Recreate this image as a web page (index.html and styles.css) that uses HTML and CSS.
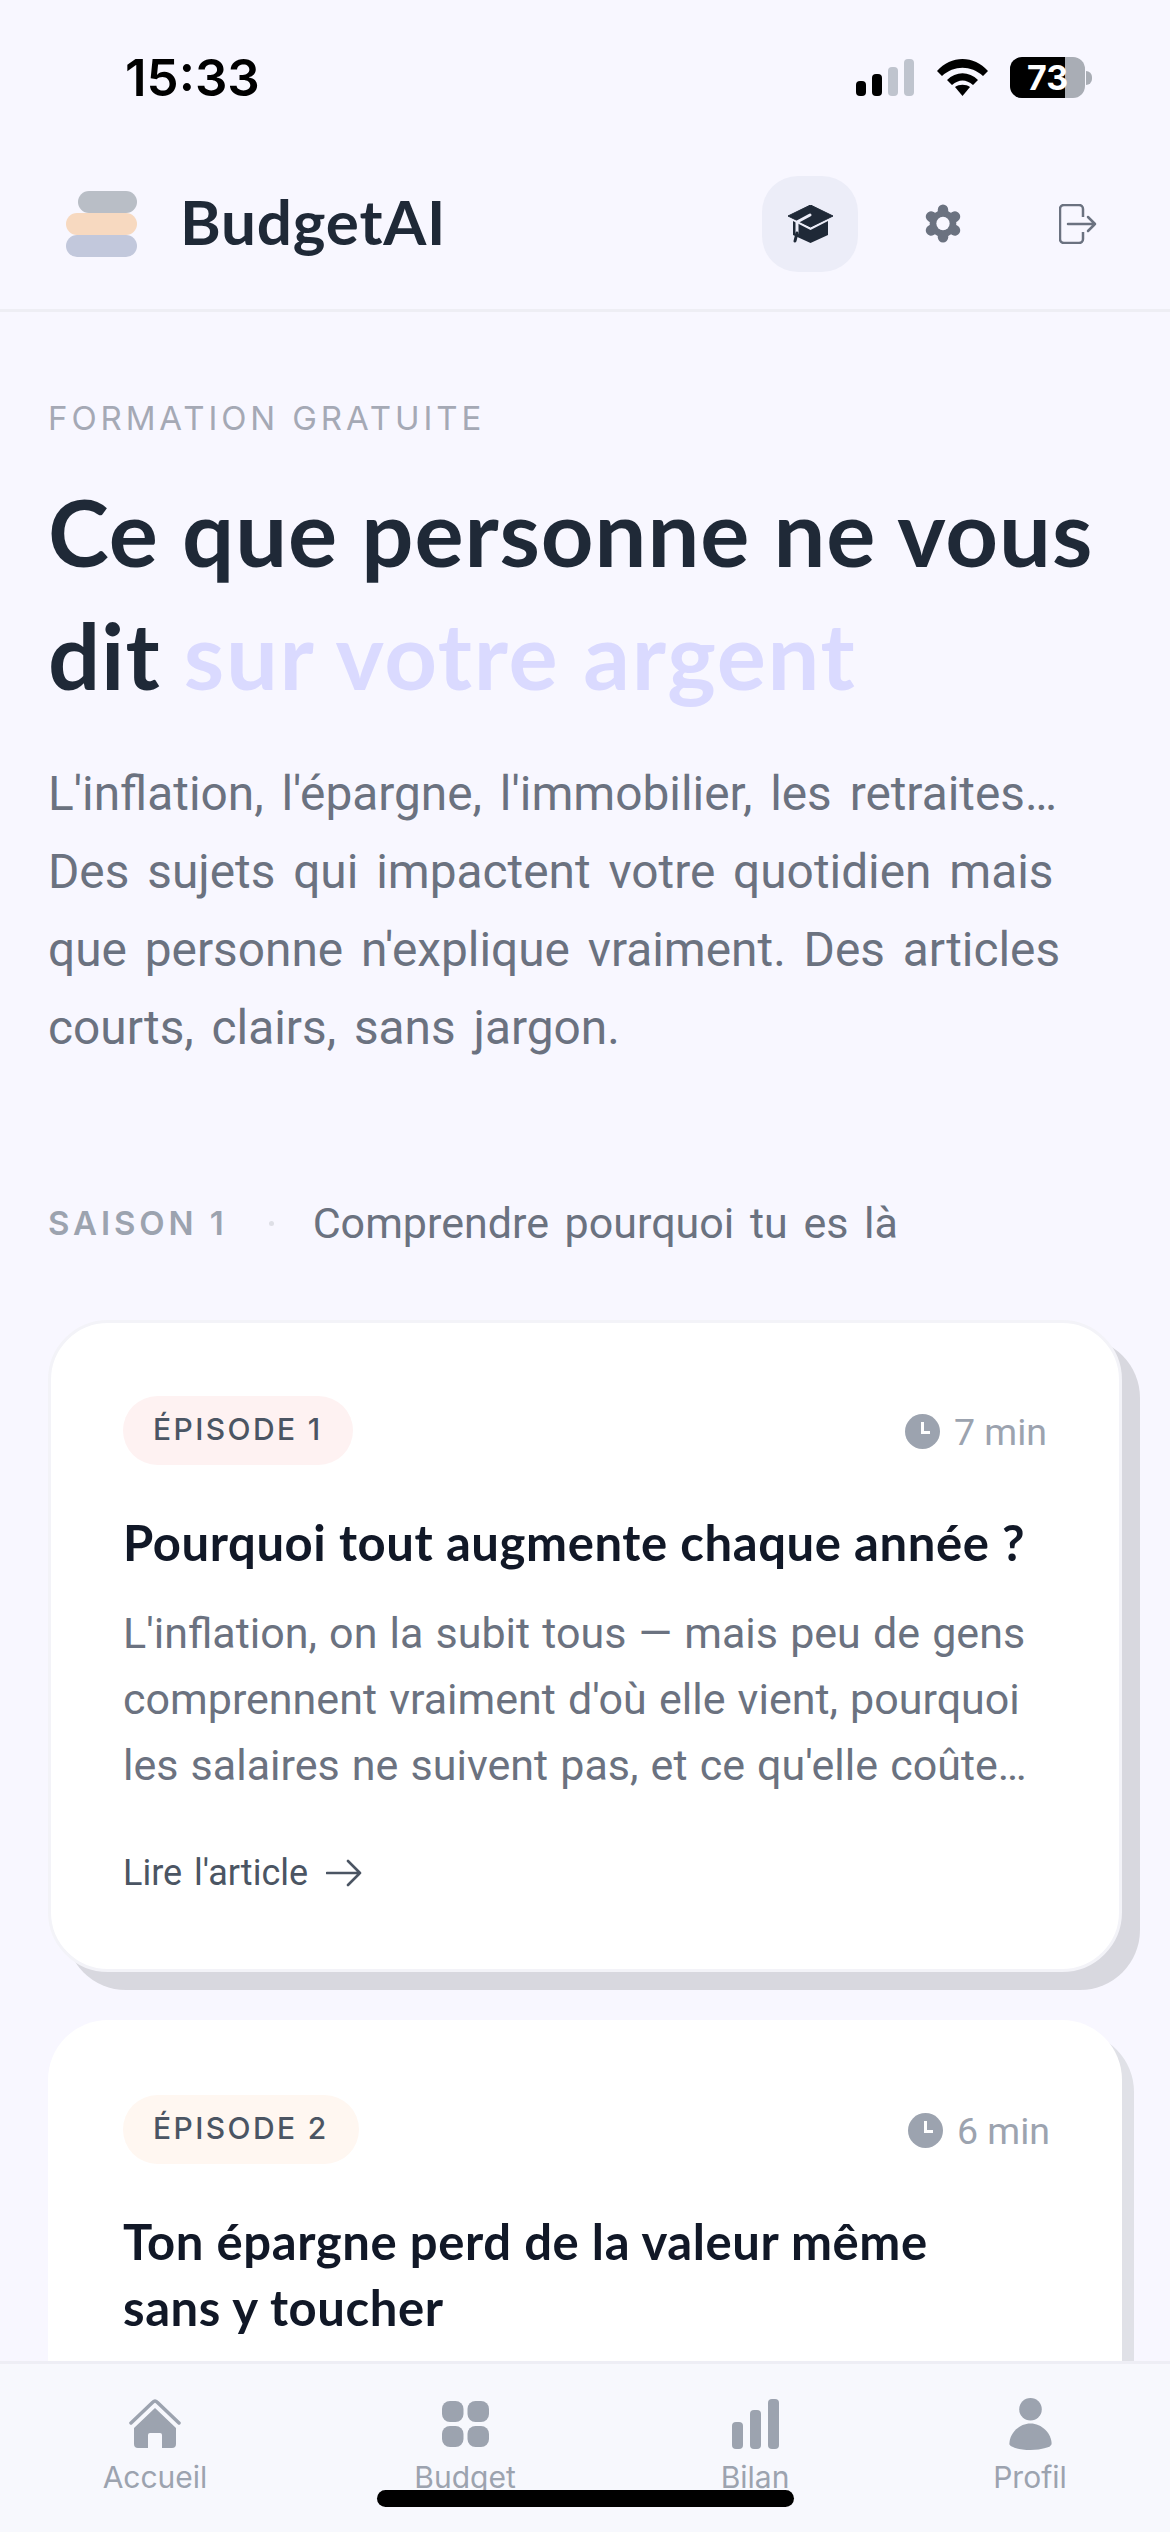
FILE: index.html

```html
<!DOCTYPE html>
<html lang="fr">
<head>
    <meta charset="UTF-8">
    <meta name="viewport" content="width=device-width, initial-scale=1.0">
    <title>BudgetAI - Formation</title>
    <link rel="stylesheet" href="styles.css">
</head>
<body>
    <div class="status-bar">
        <span class="clock-time">15:33</span>
        <div class="status-icons">
            <svg class="signal" width="59" height="37" viewBox="0 0 59 37">
                <rect x="0" y="22" width="10" height="15" rx="4" fill="#000"/>
                <rect x="16" y="15" width="10" height="22" rx="4" fill="#000"/>
                <rect x="32" y="8" width="10" height="29" rx="4" fill="#bfc4ce"/>
                <rect x="48" y="0" width="10" height="37" rx="4" fill="#bfc4ce"/>
            </svg>
            <svg class="wifi" width="51" height="37" viewBox="0 0 51 37">
                <path d="M0 12C14-4 37-4 51 12L46 17C34 6 17 6 5 17Z" fill="#000"/>
                <path d="M10 21C19 12 32 12 41 21L36 26C29 20 22 20 15 26Z" fill="#000"/>
                <path d="M18 28C22 25 29 25 33 28L25.500 37Z" fill="#000"/>
            </svg>
            <div class="battery">
                <div class="battery-body">
                    <div class="battery-fill"></div>
                    <span class="battery-num">73</span>
                </div>
                <div class="battery-nub"></div>
            </div>
        </div>
    </div>

    <header class="top-bar">
        <div class="brand">
            <div class="logo">
                <span class="pill pill-grey"></span>
                <span class="pill pill-peach"></span>
                <span class="pill pill-blue"></span>
            </div>
            <span class="brand-name">BudgetAI</span>
        </div>
        <div class="top-actions">
            <div class="icon-btn active">
                <svg width="45" height="38" viewBox="0 0 45 38">
                    <path d="M22.500 0L45 11L22.500 22L0 11Z" fill="#1f2937" stroke="#1f2937" stroke-linejoin="round"/>
                    <path d="M5 16L22.500 25L40 16V30L22.500 38L5 30Z" fill="#1f2937"/>
                    <path d="M22 10L9 17V28" fill="none" stroke="#ecedf8" stroke-width="3" stroke-linecap="round" stroke-linejoin="round"/>
                    <path d="M9 28L7 36" stroke="#1f2937" stroke-width="3" stroke-linecap="round"/>
                </svg>
            </div>
            <div class="icon-btn gear">
                <svg width="38" height="39" viewBox="0 0 40 40">
                    <g stroke="#6b7280" stroke-width="11" stroke-linecap="round">
                        <path d="M20 5.500V34.500"/>
                        <path d="M7.400 12.750L32.600 27.250"/>
                        <path d="M7.400 27.250L32.600 12.750"/>
                    </g>
                    <circle cx="20" cy="20" r="14" fill="#6b7280"/>
                    <circle cx="20" cy="20" r="7" fill="#f8f7ff"/>
                </svg>
            </div>
            <div class="icon-btn logout">
                <svg width="38" height="40" viewBox="0 0 38 40">
                    <path d="M24 13V5a4 4 0 0 0-4-4H5a4 4 0 0 0-4 4v30a4 4 0 0 0 4 4h15a4 4 0 0 0 4-4v-7" fill="none" stroke="#6b7280" stroke-width="2.500"/>
                    <path d="M9 20H36M29 13L36 20L29 27" fill="none" stroke="#6b7280" stroke-width="2.500" stroke-linecap="round" stroke-linejoin="round"/>
                </svg>
            </div>
        </div>
    </header>

    <main class="content">
        <p class="eyebrow">FORMATION GRATUITE</p>
        <h1 class="hero-title">
            <span class="hero-line">Ce que personne ne vous</span>
            <span class="hero-line">dit <span class="accent">sur votre argent</span></span>
        </h1>
        <p class="hero-text">L'inflation, l'épargne, l'immobilier, les retraites… Des sujets qui impactent votre quotidien mais que personne n'explique vraiment. Des articles courts, clairs, sans jargon.</p>

        <div class="season">
            <span class="season-num">SAISON 1</span>
            <span class="season-dot"></span>
            <span class="season-name">Comprendre pourquoi tu es là</span>
        </div>

        <article class="card card-first">
            <div class="card-top">
                <span class="badge badge-red">ÉPISODE 1</span>
                <span class="duration">
                    <svg width="35" height="35" viewBox="0 0 35 35"><circle cx="17.500" cy="17.500" r="17.500" fill="#9ca3af"/><path d="M17.500 8V18.500H25" fill="none" stroke="#fff" stroke-width="3"/></svg>
                    7 min
                </span>
            </div>
            <h2 class="card-title">Pourquoi tout augmente chaque année ?</h2>
            <p class="card-text">L'inflation, on la subit tous — mais peu de gens comprennent vraiment d'où elle vient, pourquoi les salaires ne suivent pas, et ce qu'elle coûte…</p>
            <div class="read-link">
                Lire l'article
                <svg width="36" height="28" viewBox="0 0 36 28"><path d="M1 14H34M22 2L34 14L22 26" fill="none" stroke="#4b5563" stroke-width="2.600" stroke-linecap="round" stroke-linejoin="round"/></svg>
            </div>
        </article>

        <article class="card card-second">
            <div class="card-top">
                <span class="badge badge-orange">ÉPISODE 2</span>
                <span class="duration">
                    <svg width="35" height="35" viewBox="0 0 35 35"><circle cx="17.500" cy="17.500" r="17.500" fill="#9ca3af"/><path d="M17.500 8V18.500H25" fill="none" stroke="#fff" stroke-width="3"/></svg>
                    6 min
                </span>
            </div>
            <h2 class="card-title">Ton épargne perd de la valeur même<br>sans y toucher</h2>
        </article>
    </main>

    <nav class="bottom-nav">
        <div class="nav-item">
            <svg width="52" height="50" viewBox="0 0 52 50">
                <path d="M2 24L24 3Q26 1 28 3L50 24" fill="none" stroke="#9ca3af" stroke-width="3.500" stroke-linecap="round" stroke-linejoin="round"/>
                <path d="M26 9L47 29V45a4 4 0 0 1-4 4H33V36a2 2 0 0 0-2-2H21a2 2 0 0 0-2 2V49H9a4 4 0 0 1-4-4V29Z" fill="#9ca3af"/>
            </svg>
            <span>Accueil</span>
        </div>
        <div class="nav-item">
            <svg width="47" height="50" viewBox="0 0 47 50">
                <rect x="0" y="2" width="21.500" height="21" rx="8" fill="#9ca3af"/>
                <rect x="25.500" y="2" width="21.500" height="21" rx="8" fill="#9ca3af"/>
                <rect x="0" y="27" width="21.500" height="21" rx="8" fill="#9ca3af"/>
                <rect x="25.500" y="27" width="21.500" height="21" rx="8" fill="#9ca3af"/>
            </svg>
            <span>Budget</span>
        </div>
        <div class="nav-item">
            <svg width="47" height="50" viewBox="0 0 47 50">
                <rect x="0" y="23" width="11" height="27" rx="4" fill="#9ca3af"/>
                <rect x="18" y="11" width="11" height="39" rx="4" fill="#9ca3af"/>
                <rect x="36" y="0" width="11" height="50" rx="4" fill="#9ca3af"/>
            </svg>
            <span>Bilan</span>
        </div>
        <div class="nav-item">
            <svg width="43" height="53" viewBox="0 0 43 53">
                <circle cx="21.500" cy="11.500" r="11.500" fill="#9ca3af"/>
                <path d="M21.500 26C33 26 43 36 43 47C43 50 33 53 21.500 53S0 50 0 47C0 36 10 26 21.500 26Z" fill="#9ca3af"/>
            </svg>
            <span>Profil</span>
        </div>
    </nav>
    <div class="home-indicator"></div>
</body>
</html>
```

FILE: styles.css

```css
* {
    box-sizing: border-box;
}

html, body {
    margin: 0;
    padding: 0;
}

body {
    width: 1170px;
    height: 2532px;
    overflow: hidden;
    display: flex;
    flex-direction: column;
    position: relative;
    background-color: #f8f7ff;
    font-family: "Inter", sans-serif;
}

/* status bar */
.status-bar {
    height: 138px;
    flex-shrink: 0;
    display: flex;
    justify-content: space-between;
    align-items: flex-start;
    padding: 50px 78px 0 125px;
}

.clock-time {
    font-size: 51px;
    line-height: 56px;
    font-weight: 600;
    color: #000;
}

.status-icons {
    display: flex;
    align-items: center;
    gap: 22px;
    margin-top: 7px;
}

.battery {
    display: flex;
    align-items: center;
    gap: 1px;
}

.battery-body {
    width: 75px;
    height: 41px;
    border-radius: 12px;
    background-color: #a9adb5;
    overflow: hidden;
    position: relative;
    display: flex;
    align-items: center;
    justify-content: center;
}

.battery-fill {
    position: absolute;
    left: 0;
    top: 0;
    bottom: 0;
    width: 55px;
    background-color: #000;
}

.battery-num {
    position: relative;
    font-size: 34px;
    font-weight: 700;
    color: #fff;
    line-height: 41px;
}

.battery-nub {
    width: 6px;
    height: 14px;
    border-radius: 0 6px 6px 0;
    background-color: #a9adb5;
}

/* top bar */
.top-bar {
    height: 174px;
    flex-shrink: 0;
    display: flex;
    justify-content: space-between;
    align-items: center;
    padding: 0 73px 0 66px;
    border-bottom: 3px solid #eeeef4;
}

.brand {
    display: flex;
    align-items: center;
    gap: 43px;
}

.logo {
    width: 71px;
    display: flex;
    flex-direction: column;
    align-items: flex-end;
}

.pill {
    display: block;
    width: 71px;
    height: 22px;
    border-radius: 11px;
}

.pill-grey {
    width: 59px;
    background-color: #b9bec6;
}

.pill-peach {
    background-color: #f7d9c0;
}

.pill-blue {
    background-color: #c2c8dc;
}

.brand-name {
    margin-bottom: 5px;
    font-family: "Lato", sans-serif;
    font-size: 62px;
    font-weight: 700;
    letter-spacing: 0.8px;
    color: #1f2937;
}

.top-actions {
    display: flex;
    align-items: center;
}

.icon-btn {
    height: 96px;
    display: flex;
    align-items: center;
    justify-content: center;
}

.icon-btn.active {
    width: 96px;
    border-radius: 36px;
    background-color: #ecedf8;
}

.icon-btn.gear {
    width: 38px;
    margin-left: 66px;
}

.icon-btn.logout {
    width: 38px;
    margin-left: 97px;
}

/* main content */
.content {
    flex: 1;
    min-height: 0;
    overflow: hidden;
    padding: 86px 48px 0;
}

.eyebrow {
    margin: 0;
    font-size: 33px;
    line-height: 40px;
    letter-spacing: 3.9px;
    color: #a5a9b5;
}

.hero-title {
    margin: 32px 0 0;
    font-family: "Lato", sans-serif;
    font-size: 92px;
    line-height: 123px;
    font-weight: 700;
    letter-spacing: 0.9px;
    color: #1f2937;
}

.hero-line {
    display: block;
}

.accent {
    letter-spacing: 1.7px;
    color: #dadaff;
}

.hero-text {
    margin: 39px 0 0;
    font-family: "Roboto", sans-serif;
    font-size: 47.8px;
    line-height: 78px;
    word-spacing: 6px;
    color: #6b7280;
}

.season {
    display: flex;
    align-items: center;
    margin-top: 131px;
}

.season-num {
    font-size: 33px;
    font-weight: 600;
    letter-spacing: 3.9px;
    color: #9ca3af;
}

.season-dot {
    width: 5px;
    height: 5px;
    border-radius: 50%;
    margin: 0 39px 0 41px;
    background-color: #dedfe6;
}

.season-name {
    font-family: "Roboto", sans-serif;
    font-size: 43px;
    word-spacing: 5px;
    color: #6b7280;
}

/* cards */
.card {
    width: 1074px;
    background-color: #fff;
    border-radius: 60px;
}

.card-first {
    height: 652px;
    margin-top: 72px;
    padding: 73px 72px 0 72px;
    border: 3px solid #f3f3f8;
    box-shadow: 18px 18px 0 #d8d8df;
}

.card-second {
    height: 520px;
    margin-top: 48px;
    padding: 75px 72px 0 75px;
    box-shadow: 12px 12px 0 #e0e1e7;
}

.card-top {
    display: flex;
    justify-content: space-between;
    align-items: center;
}

.badge {
    height: 69px;
    padding: 0 30px 3px;
    border-radius: 35px;
    display: flex;
    align-items: center;
    font-size: 30px;
    font-weight: 500;
    letter-spacing: 2.4px;
    color: #4b5563;
}

.badge-red {
    background-color: #fef2f2;
}

.badge-orange {
    background-color: #fff7f1;
}

.duration {
    display: flex;
    align-items: center;
    gap: 14px;
    margin-top: 2px;
    font-family: "Roboto", sans-serif;
    font-size: 37.5px;
    color: #9ca3af;
}

.card-title {
    margin: 44px 0 0;
    font-family: "Lato", sans-serif;
    font-size: 49px;
    line-height: 66px;
    font-weight: 700;
    letter-spacing: 0.6px;
    color: #111827;
}

.card-text {
    margin: 25px 0 0;
    font-family: "Roboto", sans-serif;
    font-size: 43px;
    line-height: 66px;
    word-spacing: 1.5px;
    color: #6b7280;
}

.read-link {
    display: flex;
    align-items: center;
    gap: 18px;
    margin-top: 54px;
    font-family: "Roboto", sans-serif;
    font-size: 36px;
    word-spacing: 3px;
    color: #4b5563;
}

/* bottom nav */
.bottom-nav {
    height: 171px;
    flex-shrink: 0;
    display: grid;
    grid-template-columns: 310px 310px 270px 1fr;
    padding: 34px 0 0 0;
    border-top: 3px solid #eeeef5;
    background-color: #f7f8fd;
}

.nav-item {
    display: flex;
    flex-direction: column;
    align-items: center;
    gap: 9px;
    font-size: 30px;
    line-height: 36px;
    color: #9ca3af;
}

.nav-item svg {
    height: 52px;
}

.home-indicator {
    position: absolute;
    left: 377px;
    bottom: 25px;
    width: 417px;
    height: 17px;
    border-radius: 9px;
    background-color: #000;
}
```
